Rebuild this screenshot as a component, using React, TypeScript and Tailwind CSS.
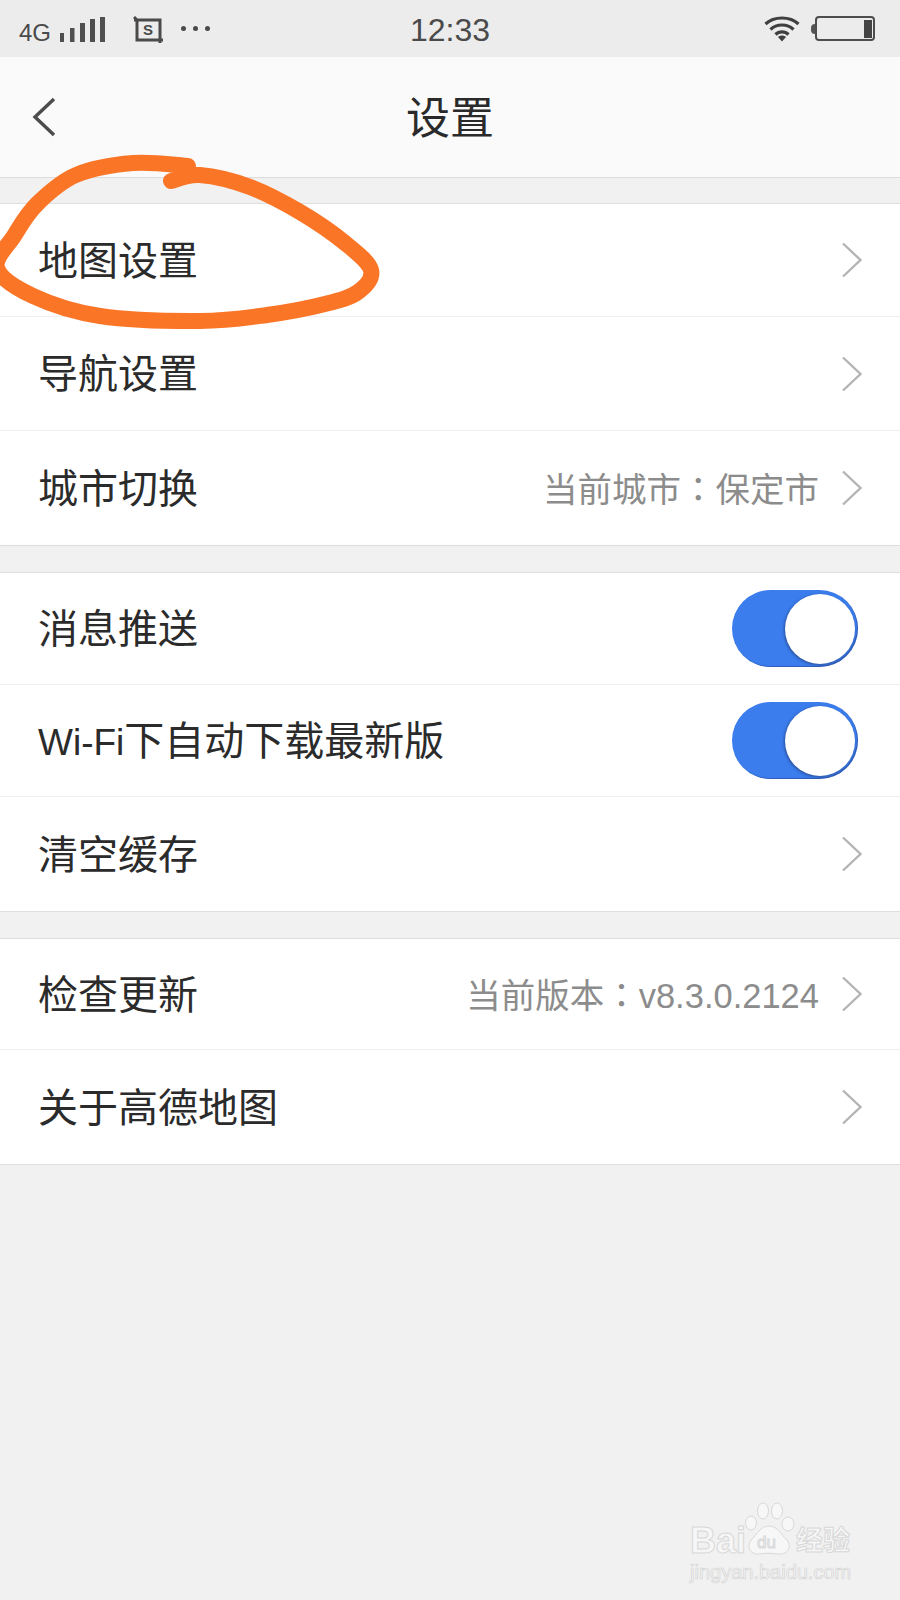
import React from 'react';

const Chevron = () => (
  <svg width="22" height="36" viewBox="0 0 22 36" fill="none" className="shrink-0">
    <path d="M2 1.5 L19.5 18 L2 34.5" stroke="#b4b4b4" strokeWidth="2.4" />
  </svg>
);

const Toggle = () => (
  <div className="flex h-[77px] w-[126px] items-center justify-end rounded-full bg-[#3b7ded] pr-[3px] shadow-[inset_-1px_-1px_1px_rgba(40,70,140,0.55)]">
    <div className="h-[70px] w-[70px] rounded-full bg-white shadow-[-1px_1px_3px_rgba(30,50,100,0.6)]" />
  </div>
);

type RowProps = {
  label: React.ReactNode;
  value?: [string, string];
  toggle?: boolean;
  last?: boolean;
  height: string;
};

const Row: React.FC<RowProps> = ({ label, value, toggle, last, height }) => (
  <div className={`flex items-center pl-[38px] ${toggle ? 'pr-[42px]' : 'pr-[37px]'} ${height} ${last ? '' : 'border-b border-[#efefef]'}`}>
    <span className="flex-1 pt-[1px] text-[40px] leading-none text-[#2b2b2b]">{label}</span>
    {value && (
      <span className="mr-[22px] pt-[1px] text-[34.5px] leading-none text-[#8c8c8c]">
        {value[0]}
        <span className="[font-family:'Noto_Sans_CJK_TC',sans-serif]">：</span>
        {value[1]}
      </span>
    )}
    {toggle ? <Toggle /> : <Chevron />}
  </div>
);

const StatusBar = () => (
  <div className="flex h-[57px] shrink-0 items-center bg-[#ececec] pl-[19px] pr-[25px] text-[#4a4a4a]">
    <span className="w-[41px] pt-[9px] text-[24px] leading-none">4G</span>
    <svg width="46" height="26" viewBox="0 0 46 26" fill="#4f4f4f" className="mt-[3px]">
      <rect x="0" y="16" width="4" height="9" />
      <rect x="10" y="11" width="4.5" height="14" />
      <rect x="20" y="6" width="5" height="19" />
      <rect x="30" y="2" width="5" height="23" />
      <rect x="40" y="0" width="5" height="25" />
    </svg>
    <div className="relative ml-[27px] mt-[1px] h-[27px] w-[31px]">
      <svg width="31" height="27" viewBox="0 0 31 27" fill="none" stroke="#4a4a4a" strokeWidth="3" className="absolute inset-0">
        <path d="M1 1 L4 4 V24 H30 M1 4 H27 V27" />
      </svg>
      <span className="absolute left-[10px] top-[6px] text-[15px] font-bold leading-none">S</span>
    </div>
    <div className="ml-[17px] flex gap-[7px]">
      <div className="h-[5px] w-[5px] rounded-full bg-[#4a4a4a]" />
      <div className="h-[5px] w-[5px] rounded-full bg-[#4a4a4a]" />
      <div className="h-[5px] w-[5px] rounded-full bg-[#4a4a4a]" />
    </div>
    <span className="ml-[200px] pt-[2px] text-[32px] leading-none">12:33</span>
    <svg width="36" height="27" viewBox="0 0 36 27" fill="none" stroke="#3f3f3f" strokeWidth="3.2" className="ml-auto">
      <path d="M1.5 9 C10 1 26 1 34.5 9" />
      <path d="M6.5 14.5 C12.5 8.5 23.5 8.5 29.5 14.5" />
      <path d="M11.5 19.5 C15 16 21 16 24.5 19.5" />
      <path d="M14 22 L18 26.5 L22 22 C20 20 16 20 14 22 Z" fill="#3f3f3f" stroke="none" />
    </svg>
    <div className="ml-[11px] h-[10px] w-[4px] rounded-l-full bg-[#555]" />
    <div className="flex h-[25px] w-[60px] items-center justify-end rounded-[4px] border-2 border-[#4d4d4d] pr-[1px]">
      <div className="h-[18px] w-[8px] bg-[#444]" />
    </div>
  </div>
);

// hand-drawn loop, points traced off the screenshot
const loop: [number, number][] = [
  [171, 181], [200, 175], [250, 187], [300, 212], [345, 243], [371, 270], [358, 292], [325, 304],
  [267, 315], [200, 321], [100, 316], [33, 296], [-3, 268], [14, 236], [37, 204], [76, 175],
  [133, 163], [188, 166],
];

const smoothPath = (pts: [number, number][]) => {
  let d = `M${pts[0][0]} ${pts[0][1]}`;
  for (let i = 0; i < pts.length - 1; i++) {
    const p0 = pts[Math.max(i - 1, 0)];
    const p1 = pts[i];
    const p2 = pts[i + 1];
    const p3 = pts[Math.min(i + 2, pts.length - 1)];
    d += ` C${p1[0] + (p2[0] - p0[0]) / 6} ${p1[1] + (p2[1] - p0[1]) / 6} ${p2[0] - (p3[0] - p1[0]) / 6} ${p2[1] - (p3[1] - p1[1]) / 6} ${p2[0]} ${p2[1]}`;
  }
  return d;
};

const Scribble = () => (
  <svg width="400" height="340" viewBox="0 0 400 340" fill="none" className="absolute left-0 top-0">
    <path d={smoothPath(loop)} stroke="#fb7527" strokeWidth="16" strokeLinecap="round" strokeLinejoin="round" />
  </svg>
);

const Watermark = () => (
  <div className="absolute left-[690px] top-[1502px] flex w-[170px] flex-col text-[#f6f6f6]">
    <div className="flex h-[54px] items-end">
      <span className="text-[36px] font-bold leading-[30px] [-webkit-text-stroke:1px_#d8d8d8]">Bai</span>
      <svg width="52" height="54" viewBox="0 0 52 54" fill="#f7f7f7" stroke="#d8d8d8" strokeWidth="1" className="-ml-[2px] shrink-0">
        <ellipse cx="7" cy="21" rx="5.5" ry="7" />
        <ellipse cx="19" cy="9" rx="5.5" ry="8" />
        <ellipse cx="33" cy="9" rx="5.5" ry="8" />
        <ellipse cx="44" cy="22" rx="6" ry="7" />
        <path d="M25 24 C34 24 37 33 43 38 C49 46 42 53 34 52 C28 51 22 51 16 52 C7 53 2 46 7 38 C13 33 16 24 25 24 Z" />
        <text x="13" y="46" fontSize="17" fontFamily="Liberation Sans" fill="#f3f3f3">du</text>
      </svg>
      <span className="text-[27px] font-bold leading-[30px] [-webkit-text-stroke:1px_#d8d8d8]">经验</span>
    </div>
    <span className="mt-[6px] text-[20px] leading-[20px] [-webkit-text-stroke:0.7px_#d4d4d4]">jingyan.baidu.com</span>
  </div>
);

export default function App() {
  return (
    <div className="relative flex h-[1600px] w-[900px] flex-col overflow-hidden bg-[#f1f1f1] [font-family:'Liberation_Sans','Noto_Sans_CJK_SC',sans-serif]">
      <StatusBar />

      <div className="relative flex h-[121px] shrink-0 items-center justify-center border-b border-[#dcdcdc] bg-[#fafafa]">
        <svg width="24" height="40" viewBox="0 0 24 40" fill="none" className="absolute left-[32px] top-[40px]">
          <path d="M22 2 L3 20 L22 38" stroke="#4c4c4c" strokeWidth="3.4" />
        </svg>
        <span className="pt-[3px] text-[44px] leading-none text-[#2a2a2a]">设置</span>
      </div>

      <div className="mt-[25px] border-y border-[#dedede] bg-white">
        <Row label="地图设置" height="h-[113px]" />
        <Row label="导航设置" height="h-[114px]" />
        <Row label="城市切换" value={['当前城市', '保定市']} height="h-[114px]" last />
      </div>

      <div className="mt-[26px] border-y border-[#dedede] bg-white">
        <Row label="消息推送" toggle height="h-[112px]" />
        <Row
          label={
            <>
              <span className="text-[37px]">Wi-Fi</span>下自动下载最新版
            </>
          }
          toggle
          height="h-[112px]"
        />
        <Row label="清空缓存" height="h-[114px]" last />
      </div>

      <div className="mt-[26px] border-y border-[#dedede] bg-white">
        <Row label="检查更新" value={['当前版本', 'v8.3.0.2124']} height="h-[111px]" />
        <Row label="关于高德地图" height="h-[114px]" last />
      </div>

      <Scribble />
      <Watermark />
    </div>
  );
}
